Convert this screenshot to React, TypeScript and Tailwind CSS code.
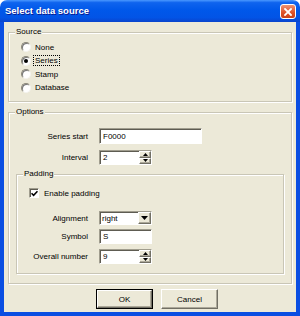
import React from "react";

const font = "font-['Liberation_Sans',Arial,sans-serif]";

function Radio({ label, checked, focus }: { label: string; checked?: boolean; focus?: boolean }) {
  return (
    <div className="flex h-[13.5px] items-center">
      <div className="ml-[12px] flex h-[10px] w-[10px] items-center justify-center rounded-full border border-t-[#8A8778] border-l-[#8A8778] border-r-[#F4F3EE] border-b-[#F4F3EE] bg-white shadow-[inset_1px_1px_0_#777]">
        {checked && <div className="h-[4px] w-[4px] rounded-full bg-black" />}
      </div>
      <span
        className={
          "ml-[2px] px-[1px] text-[8px] leading-[9px] text-black " +
          (focus ? "border border-dotted border-black" : "border border-transparent")
        }
      >
        {label}
      </span>
    </div>
  );
}

function Group({ label, className, children }: { label: string; className: string; children: React.ReactNode }) {
  return (
    <div
      className={
        "flex flex-col border border-[#C9C6B6] shadow-[inset_1px_1px_0_#fff,1px_1px_0_#fff] " + className
      }
    >
      <div className="-mt-[6px] ml-[6px] h-[10px] w-fit bg-[#ECE9D8] px-[1px] text-[8px] leading-[10px] text-black">
        {label}
      </div>
      {children}
    </div>
  );
}

const sunken =
  "border border-t-[#A09D8E] border-l-[#A09D8E] border-r-white border-b-white bg-white shadow-[inset_1px_1px_0_#5E5C52]";

function TextBox({ value, w, h }: { value: string; w: string; h: string }) {
  return (
    <div className={`${sunken} ${w} ${h} flex items-center pl-[3px] text-[8px] leading-[9px] text-black`}>{value}</div>
  );
}

function Arrow({ up }: { up?: boolean }) {
  return (
    <svg width="5" height="3" viewBox="0 0 5 3">
      {up ? <path d="M2.5 0 L5 3 L0 3 Z" fill="#000" /> : <path d="M0 0 L5 0 L2.5 3 Z" fill="#000" />}
    </svg>
  );
}

const raised =
  "border border-t-white border-l-white border-r-[#716F64] border-b-[#716F64] bg-[#ECE9D8] shadow-[inset_-1px_-1px_0_#ACA899]";

function Spin({ value }: { value: string }) {
  return (
    <div className={`${sunken} flex h-[15px] w-[53px] items-stretch text-[8px] leading-[9px] text-black`}>
      <div className="flex flex-1 items-center pl-[3px]">{value}</div>
      <div className="flex w-[12px] flex-col">
        <div className={`${raised} flex flex-1 items-center justify-center`}>
          <Arrow up />
        </div>
        <div className={`${raised} flex flex-1 items-center justify-center`}>
          <Arrow />
        </div>
      </div>
    </div>
  );
}

function Combo({ value }: { value: string }) {
  return (
    <div className={`${sunken} flex h-[14px] w-[53px] items-stretch text-[8px] leading-[9px] text-black`}>
      <div className="flex flex-1 items-center pl-[2px]">{value}</div>
      <div className={`${raised} flex w-[13px] items-center justify-center`}>
        <svg width="7" height="4" viewBox="0 0 7 4">
          <path d="M0 0 L7 0 L3.5 4 Z" fill="#000" />
        </svg>
      </div>
    </div>
  );
}

function Row({ label, children, className }: { label: string; children: React.ReactNode; className: string }) {
  return (
    <div className={"flex items-center " + className}>
      <div className="w-[80px] pr-[1px] text-right text-[8px] leading-[9px] text-black">{label}</div>
      <div className="ml-[10px] flex">{children}</div>
    </div>
  );
}

export default function App() {
  return (
    <div className={`${font} flex h-[316px] w-[300px] flex-col bg-white`}>
      {/* title bar */}
      <div className="relative flex h-[22px] items-center rounded-t-[7px] bg-[linear-gradient(to_bottom,#4A98FF_0%,#0F64EE_12%,#0058EA_45%,#0254E6_80%,#0A44CC_100%)] pl-[5px]">
        <span className="text-[9.5px] font-bold leading-[10px] text-white [text-shadow:1px_1px_0_#0A1A8E]">
          Select data source
        </span>
        <div className="absolute right-[4px] top-[4px] flex h-[15px] w-[16px] items-center justify-center rounded-[3px] border border-white bg-[linear-gradient(to_bottom,#EC9272,#DE5026_60%,#C8421A)]">
          <svg width="8" height="8" viewBox="0 0 8 8">
            <path d="M1 1 L7 7 M7 1 L1 7" stroke="#fff" strokeWidth="1.8" strokeLinecap="square" />
          </svg>
        </div>
      </div>
      {/* body */}
      <div className="flex flex-1 border-x-4 border-b-4 border-[#0A4EE2] shadow-[inset_0_0_0_1px_#0535BE]">
        <div className="flex flex-1 flex-col bg-[#ECE9D8] px-[4px] pt-[10px]">
          <Group label="Source" className="h-[70px]">
            <div className="mt-[3.5px] flex flex-col">
              <Radio label="None" />
              <Radio label="Series" checked focus />
              <Radio label="Stamp" />
              <Radio label="Database" />
            </div>
          </Group>
          <Group label="Options" className="mt-[10px] h-[172px]">
            <Row label="Series start" className="mt-[11px] h-[16px]">
              <TextBox value="F0000" w="w-[103px]" h="h-[16px]" />
            </Row>
            <Row label="Interval" className="mt-[6px] h-[15px]">
              <Spin value="2" />
            </Row>
            <div className="mx-[7px] mt-[9px]">
              <Group label="Padding" className="h-[100px]">
                <div className="mt-[7px] flex h-[14px] items-center pl-[12px]">
                  <div className={`${sunken} flex h-[10px] w-[10px] items-center justify-center`}>
                    <svg width="7" height="7" viewBox="0 0 7 7">
                      <path d="M0.5 3.2 L2.6 5.3 L6.5 1.2" stroke="#000" strokeWidth="1.6" fill="none" />
                    </svg>
                  </div>
                  <span className="ml-[5px] text-[8px] leading-[9px] text-black">Enable padding</span>
                </div>
                <Row label="Alignment" className="-ml-[8px] mt-[11px] h-[14px]">
                  <Combo value="right" />
                </Row>
                <Row label="Symbol" className="-ml-[8px] mt-[4px] h-[15px]">
                  <TextBox value="S" w="w-[53px]" h="h-[15px]" />
                </Row>
                <Row label="Overall number" className="-ml-[8px] mt-[5px] h-[15px]">
                  <Spin value="9" />
                </Row>
              </Group>
            </div>
          </Group>
          <div className="ml-[88px] mt-[5px] flex gap-[8px]">
            <div className="border border-black">
              <div className={`${raised} flex h-[18px] w-[55px] items-center justify-center text-[8px] leading-[9px] text-black`}>
                OK
              </div>
            </div>
            <div className={`${raised} flex h-[20px] w-[57px] items-center justify-center text-[8px] leading-[9px] text-black`}>
              Cancel
            </div>
          </div>
        </div>
      </div>
    </div>
  );
}
